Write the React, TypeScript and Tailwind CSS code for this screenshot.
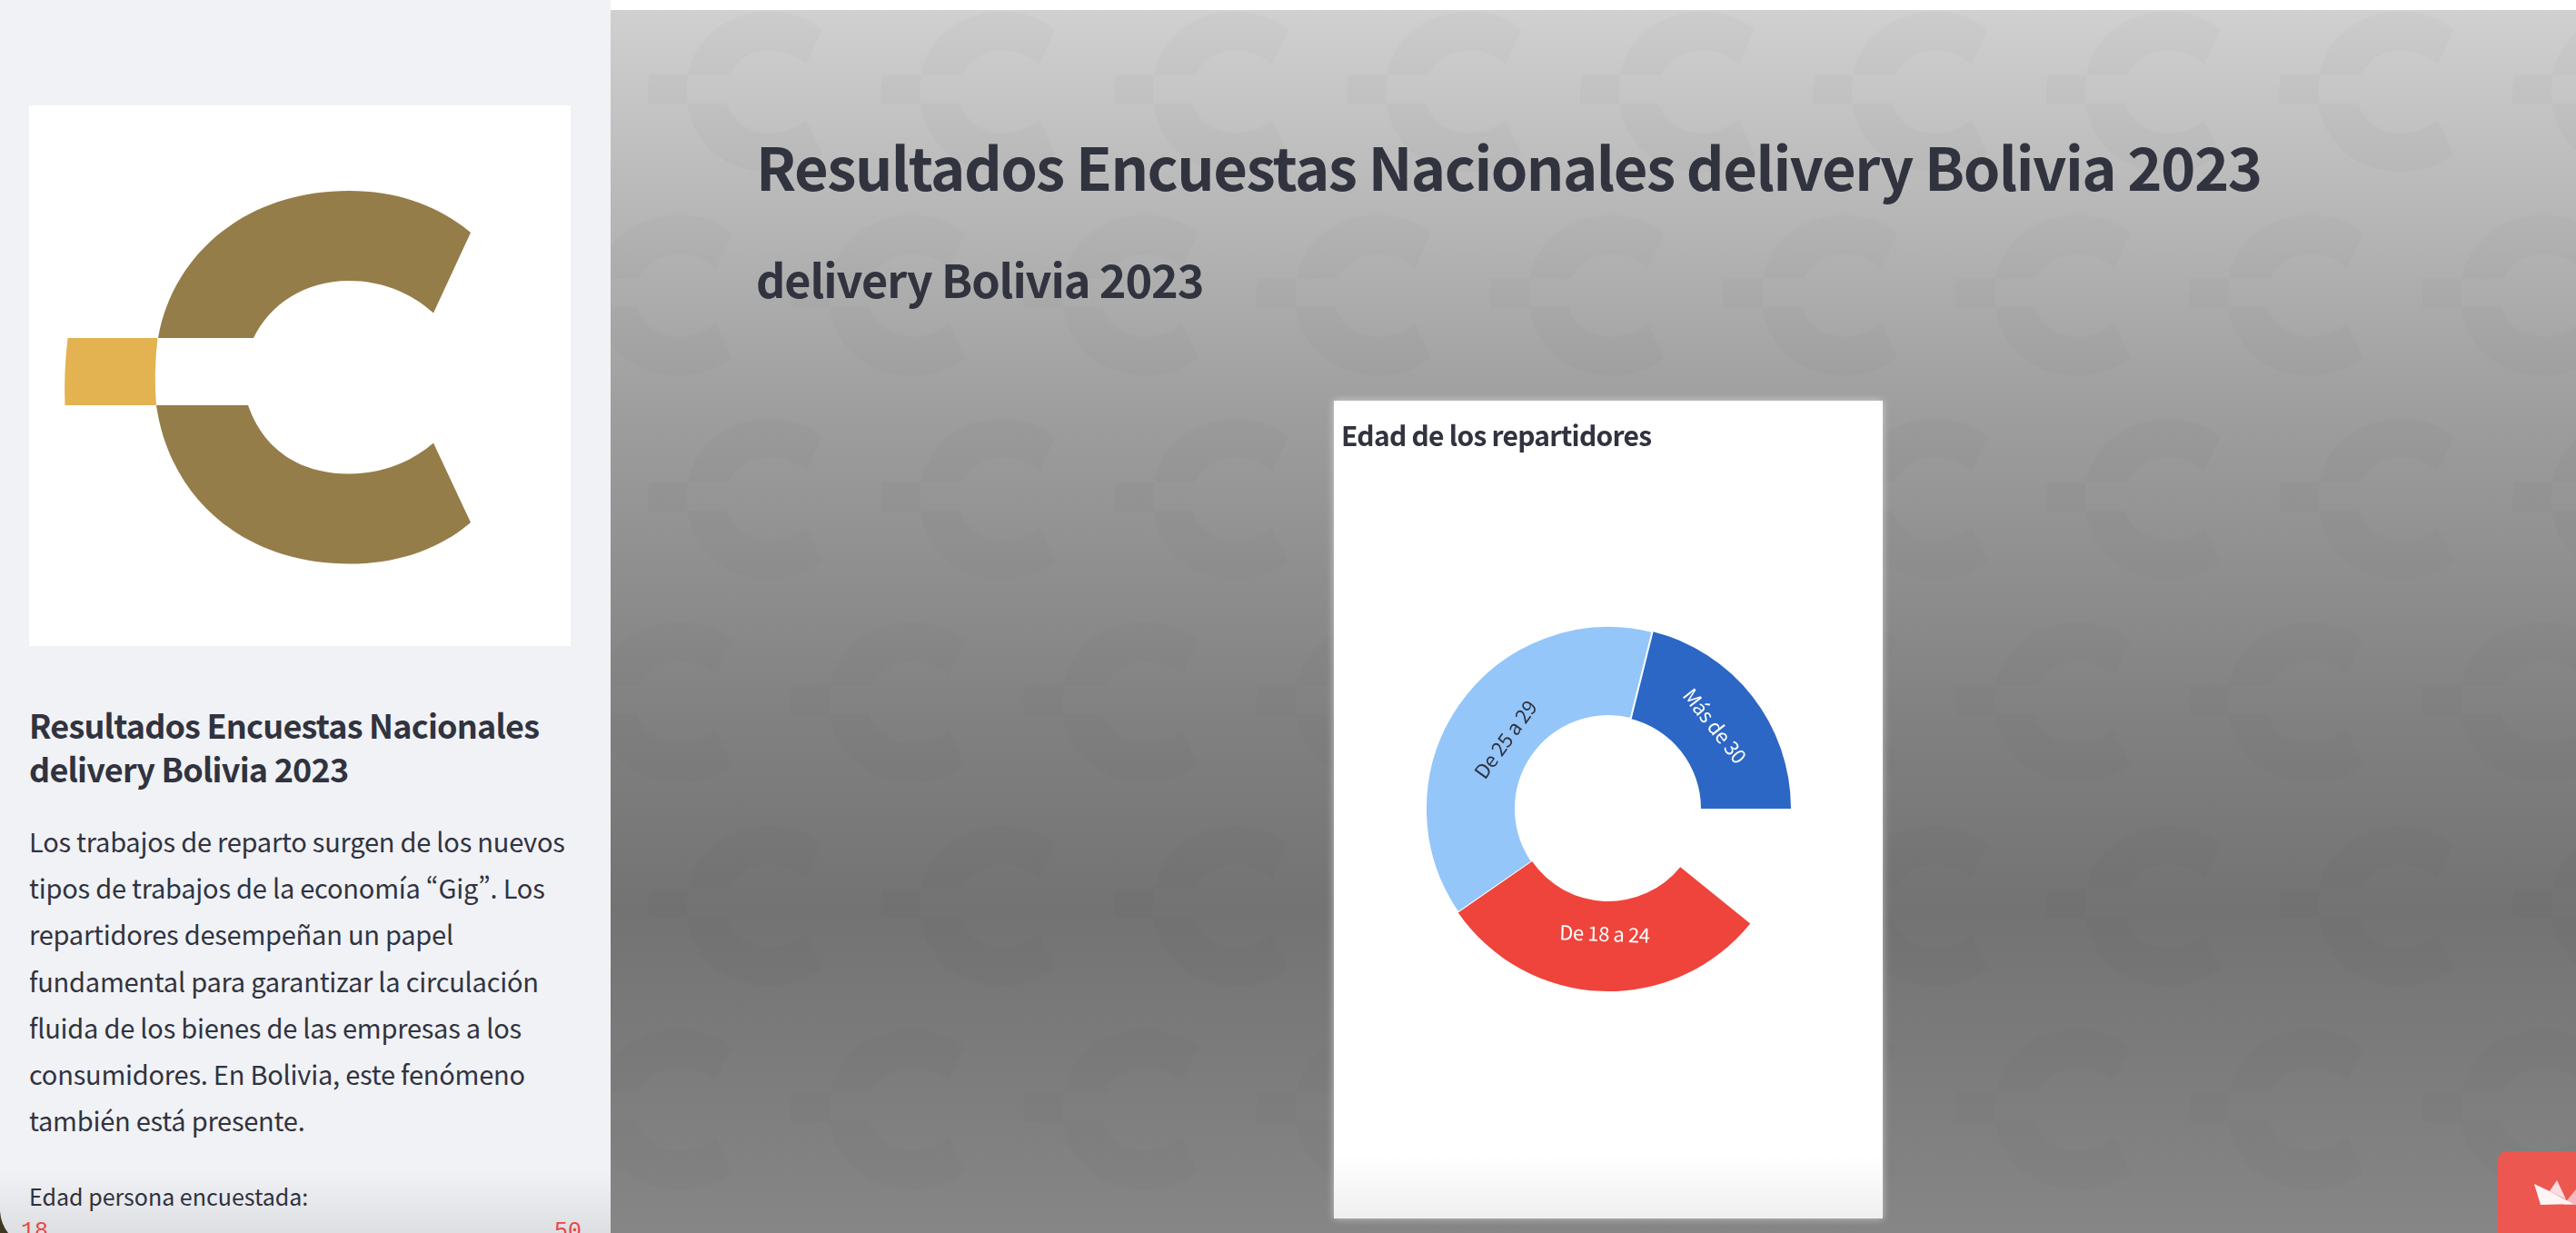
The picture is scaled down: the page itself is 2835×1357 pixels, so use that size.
import React from 'react';

const CX = 201;
const CY = 201;
const R = 201;
const r = 102;

// angle in degrees, counter clockwise from +x, y pointing up
function slice(from: number, to: number) {
    const p = (rad: number, a: number) => {
        const t = (a * Math.PI) / 180;
        return `${(CX + rad * Math.cos(t)).toFixed(2)} ${(CY - rad * Math.sin(t)).toFixed(2)}`;
    };
    const large = to - from > 180 ? 1 : 0;
    return `M${p(R, from)} A${R} ${R} 0 ${large} 0 ${p(R, to)} L${p(r, to)} A${r} ${r} 0 ${large} 1 ${p(r, from)} Z`;
}

function LogoMark({ brown, yellow }: { brown: string; yellow: string }) {
    return (
        <>
            <path fill={brown} d="M174 372 C190 280 270 210 384 210 C440 210 485 228 518 256 L477 344.5 C452 322 420 309 384 309 C335 309 297 335 279 372 Z" />
            <path fill={brown} d="M172 446 C187 550 270 620.5 384 620.5 C440 620.5 485 603 518 575 L477 487.5 C452 509 420 521.5 384 521.5 C330 521.5 290 495 273 446 Z" />
            <path fill={yellow} d="M74.5 372 L173.5 372 Q169 410 172 446 L71.5 446 Q70 410 74.5 372 Z" />
        </>
    );
}

function Watermark() {
    const marks: { x: number; y: number }[] = [];
    for (let row = 0; row < 6; row++) {
        for (let col = -1; col < 10; col++) {
            marks.push({ x: 713 + 256.5 * col + (row % 2 ? 157 : 0), y: 101 + 224 * row });
        }
    }
    return (
        <svg className="absolute inset-0 w-full h-full" aria-hidden="true">
            <g transform="translate(-672 -11)" opacity="0.03">
                {marks.map((m) => (
                    <g key={`${m.x}-${m.y}`} transform={`translate(${m.x - 71 * 0.429} ${m.y - 415 * 0.429}) scale(0.429)`}>
                        <LogoMark brown="#50505a" yellow="#50505a" />
                    </g>
                ))}
            </g>
        </svg>
    );
}

function AgeDonut() {
    return (
        <svg width="402" height="402" viewBox="0 0 402 402" className="block">
            <path d={slice(0, 76)} fill="#2c67c5" />
            <path d={slice(76, 214.7)} fill="#94c6fa" stroke="#fff" strokeWidth="2" />
            <path d={slice(214.7, 321)} fill="#ee443c" />
            <text x="88" y="125" transform="rotate(-54 88 125)" dy="8" textAnchor="middle" fontSize="22" letterSpacing="-0.4" fill="#31333f">De 25 a 29</text>
            <text x="318" y="110" transform="rotate(52 318 110)" dy="8" textAnchor="middle" fontSize="22" letterSpacing="-0.4" fill="#fff">Más de 30</text>
            <text x="197" y="339" transform="rotate(2 197 339)" dy="8" textAnchor="middle" fontSize="22" letterSpacing="-0.4" fill="#fff">De 18 a 24</text>
        </svg>
    );
}

export default function App() {
    return (
        <div className="flex w-screen h-screen overflow-hidden bg-white text-[#31333f] font-['Noto_Sans_CJK_SC','Lato',sans-serif]">
            {/* sidebar */}
            <aside className="relative w-[672px] h-full shrink-0 overflow-hidden bg-[#f0f2f6] px-[32px] pt-[116px]">
                <div className="w-[596px] h-[595px] bg-white">
                    <svg width="596" height="595" viewBox="32 116 596 595" className="block">
                        <LogoMark brown="#957d49" yellow="#e3b352" />
                    </svg>
                </div>
                <h3 className="mt-[62px] text-[36px] leading-[48px] font-semibold w-[600px] tracking-[-0.8px]">
                    Resultados Encuestas Nacionales delivery Bolivia 2023
                </h3>
                <p className="mt-[31px] text-[29px] leading-[51.2px] w-[600px] tracking-[-0.23px] [font-feature-settings:'pwid']">
                    Los trabajos de reparto surgen de los nuevos tipos de trabajos de la economía “Gig”. Los repartidores desempeñan un papel fundamental para garantizar la circulación fluida de los bienes de las empresas a los consumidores. En Bolivia, este fenómeno también está presente.
                </p>
                <div className="mt-[40px] text-[25px] leading-[36px]">Edad persona encuestada:</div>
                <div className="flex justify-between w-[617px] -ml-[9px] mt-[6px] font-['Liberation_Mono',monospace] text-[25px] leading-[32px] text-[#ff4b4b]">
                    <span>18</span>
                    <span>50</span>
                </div>
                <div className="absolute inset-x-0 bottom-0 h-[70px] bg-gradient-to-b from-transparent to-black/8" />
                <svg className="absolute left-0 bottom-0" width="10" height="24" viewBox="0 0 10 24" aria-hidden="true">
                    <path d="M0 0 Q1 14 9 24 L0 24 Z" fill="#3d3820" />
                </svg>
            </aside>

            {/* main */}
            <main className="relative flex-1 h-full pt-[11px]">
                <div className="relative h-[1346px] overflow-hidden bg-[linear-gradient(180deg,#d0d0d0_0px,#9e9e9e_440px,#808080_790px,#737373_990px,#868686_1346px)] pl-[160px] pt-[126px]">
                    <Watermark />
                    <div className="relative">
                        <h1 className="text-[65px] leading-[90px] font-semibold whitespace-nowrap tracking-[-1.53px]">
                            Resultados Encuestas Nacionales delivery Bolivia 2023
                        </h1>
                        <h2 className="mt-[45px] text-[50.4px] leading-[70px] font-semibold tracking-[-1.1px]">delivery Bolivia 2023</h2>
                        <section className="relative mt-[99px] ml-[636px] w-[604px] h-[900px] bg-white shadow-[0_0_8px_rgba(255,255,255,0.55)]">
                            <div className="pl-[8px] pt-[12px] text-[30px] leading-[50px] font-bold tracking-[-0.75px]">Edad de los repartidores</div>
                            <div className="ml-[101px] mt-[186px] w-[402px]">
                                <AgeDonut />
                            </div>
                            <div className="absolute inset-x-0 bottom-0 h-[70px] bg-gradient-to-b from-transparent to-black/6" />
                        </section>
                    </div>
                </div>
                {/* streamlit badge */}
                <div className="absolute left-[2077px] top-[1267px] w-[100px] h-[100px] rounded-[10px] bg-[#ec5850]">
                    <svg width="46" height="30" viewBox="2789 1299 46 30" className="absolute left-[40px] top-[32px]" aria-hidden="true">
                        <path d="M2821 1326 L2835 1309 L2835 1326 Z" fill="#f5b8bf" />
                        <path d="M2806 1311 L2814 1299 L2824 1320 Z" fill="#fbdde2" />
                        <path d="M2789 1303 L2806 1311 L2832 1325 L2796 1326 Z" fill="#fdf4f5" />
                    </svg>
                </div>
            </main>
        </div>
    );
}
